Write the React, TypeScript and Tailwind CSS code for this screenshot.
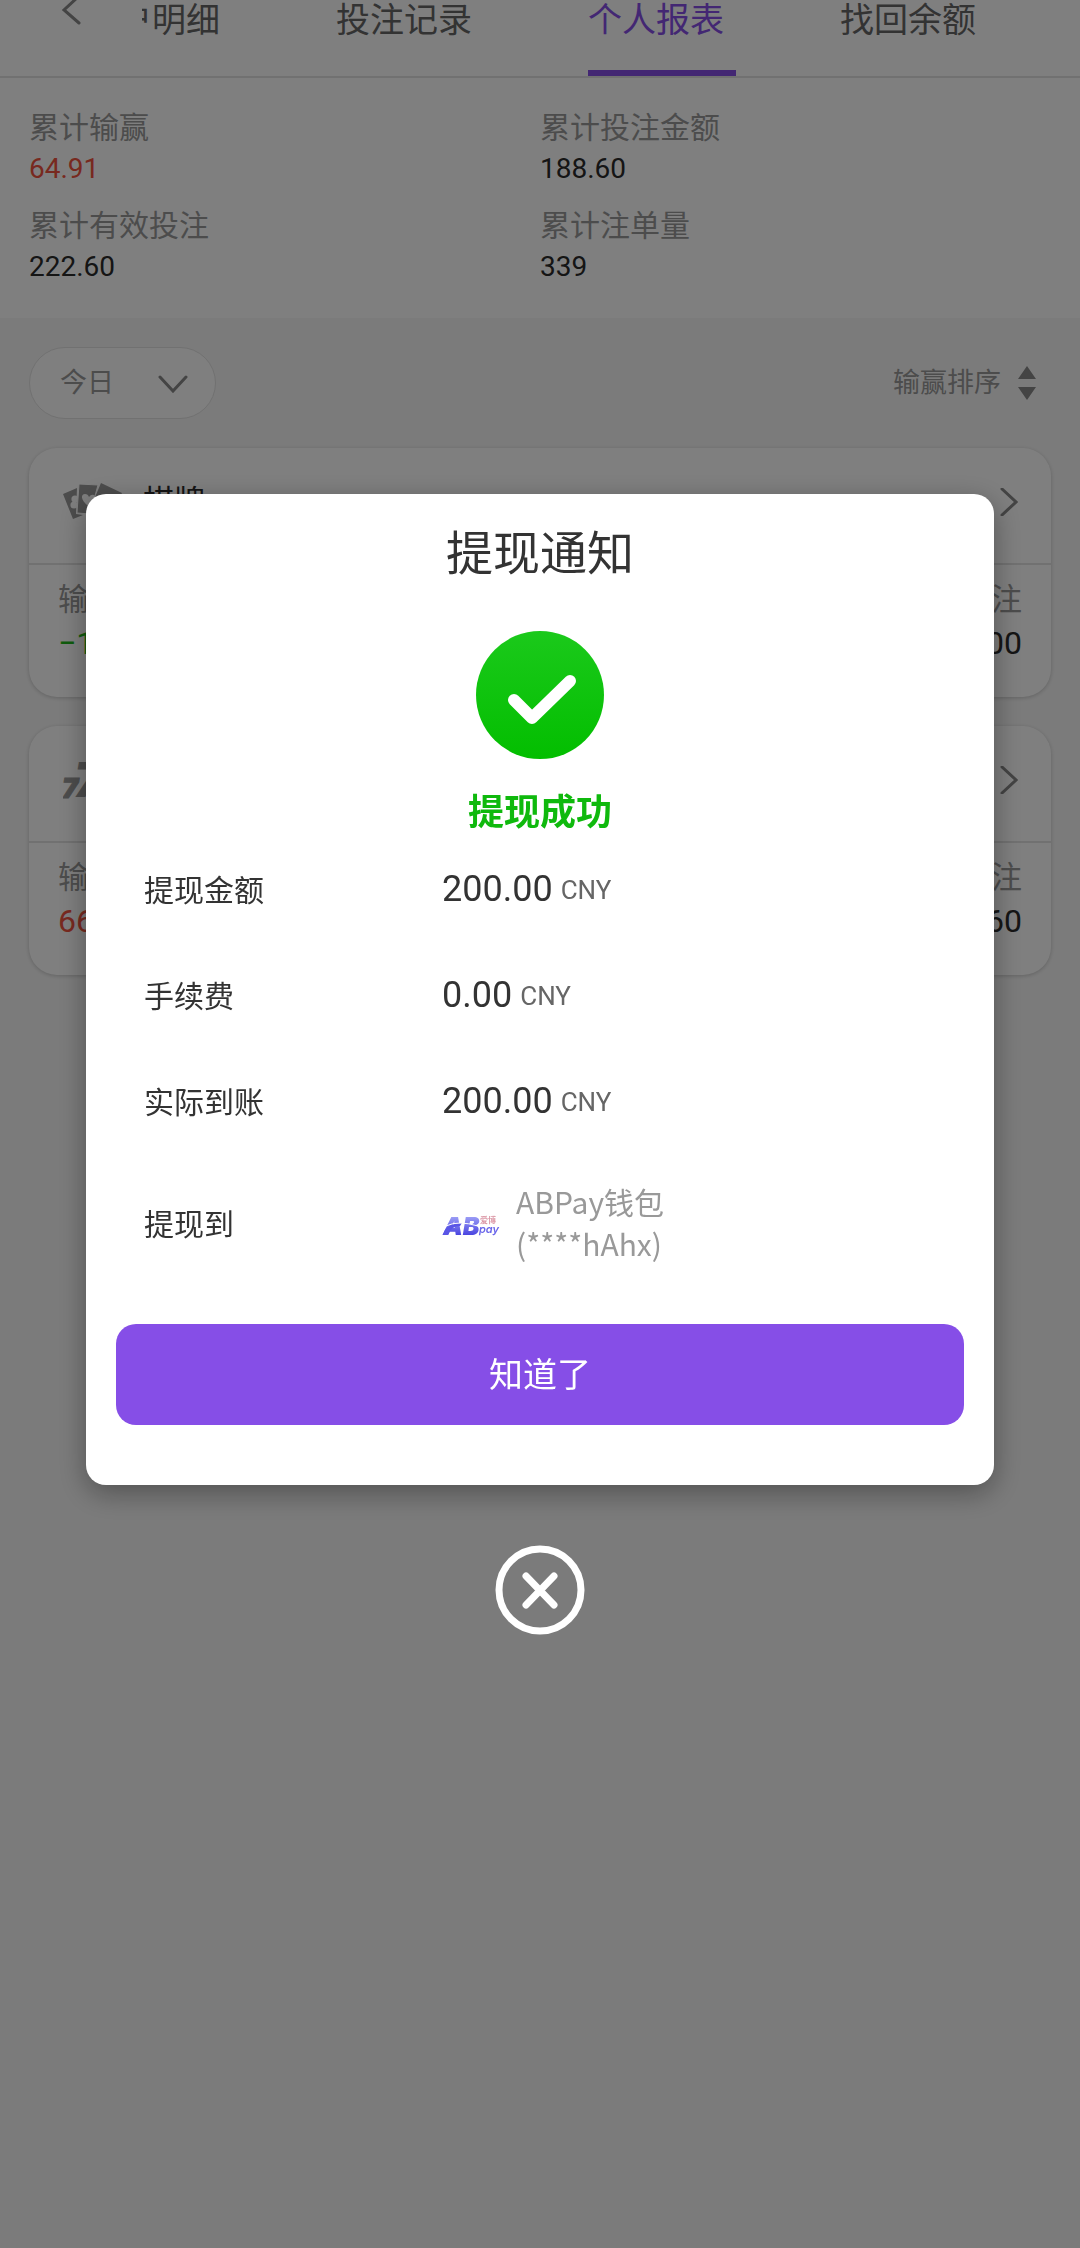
import {useState, type ReactNode} from 'react';

type Tone = 'red' | 'green' | 'dark';

const toneClass: Record<Tone, string> = {
  red: 'text-[#f0533f]',
  green: 'text-[#1fb81a]',
  dark: 'text-[#2b2b2b]',
};

const tabs = ['账户明细', '投注记录', '个人报表', '找回余额'];

const totals: {label: string; value: string; tone: Tone}[] = [
  {label: '累计输赢', value: '64.91', tone: 'red'},
  {label: '累计投注金额', value: '188.60', tone: 'dark'},
  {label: '累计有效投注', value: '222.60', tone: 'dark'},
  {label: '累计注单量', value: '339', tone: 'dark'},
];

const amounts = [
  {label: '提现金额', value: '200.00'},
  {label: '手续费', value: '0.00'},
  {label: '实际到账', value: '200.00'},
];

function CardsIcon() {
  return (
    <svg width="60" height="40" viewBox="0 0 60 40" aria-hidden="true">
      <path d="M0 12 L14 6 L13 32 L20 33 L10 37 Z" fill="#999" />
      <circle cx="12" cy="17" r="3.6" fill="#fff" />
      <circle cx="11" cy="23" r="3.6" fill="#fff" />
      <path d="M38 1 L59 11 L47 36 L27 27 Z" fill="#999" />
      <path d="M16 2 L35 3 L27 32 L14 31 Z" fill="#999" stroke="#fff" strokeWidth="1" />
      <path d="M25 24 C17 17 18 12 22 12 Q25 12 26 15 Q28 12 31 13 C34 15 32 19 25 24 Z" fill="#fff" />
    </svg>
  );
}

function SlotsIcon() {
  return (
    <svg width="60" height="40" viewBox="0 0 60 40" aria-hidden="true">
      <g fill="#999" stroke="#999" strokeWidth="1" fontFamily="Inter, sans-serif" fontWeight="900" fontStyle="italic">
        <text x="-1" y="38" fontSize="27">7</text>
        <text x="38" y="38" fontSize="27">7</text>
        <text x="11" y="37" fontSize="48" stroke="#fff" strokeWidth="2" paintOrder="stroke">7</text>
      </g>
    </svg>
  );
}

function WalletLogo() {
  return (
    <svg width="60" height="60" viewBox="0 0 60 60" role="img" aria-label="ABPay">
      <defs>
        <linearGradient id="wallet" x1="0" y1="0" x2="0" y2="1">
          <stop offset="0.2" stopColor="#9a9cf5" />
          <stop offset="0.8" stopColor="#4a45e0" />
        </linearGradient>
      </defs>
      <text x="1" y="43" fontFamily="Inter, sans-serif" fontWeight="900" fontStyle="italic" fontSize="25" fill="url(#wallet)">AB</text>
      <path d="M1 43 Q3 34 12 32 L20 31 L18 34 Q9 34 6 43 Z" fill="#5a56e6" />
      <path d="M4 34 Q16 28 36 34" fill="none" stroke="#fff" strokeWidth="1" />
      <text x="38" y="31" fontFamily="'Noto Sans CJK SC', sans-serif" fontWeight="700" fontSize="8" fill="#dc9aa8">爱博</text>
      <text x="37" y="41" fontFamily="Inter, sans-serif" fontWeight="600" fontStyle="italic" fontSize="11" fill="#6a66ea">pay</text>
    </svg>
  );
}

function GameCard({icon, title, profit, tone, valid}: {
  icon: ReactNode;
  title: string;
  profit: string;
  tone: Tone;
  valid: string;
}) {
  return (
    <article className="rounded-[28px] bg-white shadow-[0_1px_4px_rgba(0,0,0,0.2)]">
      <a href="#detail" className="flex h-[117px] items-center border-b-2 border-[#e2e2e2] pr-[33px] pb-2 pl-[34px]">
        {icon}
        <h2 className="ml-5 grow pb-1 text-[31px] text-[#2b2b2b]">{title}</h2>
        <svg width="18" height="28" viewBox="0 0 18 28" fill="none" stroke="#888" strokeWidth="3" strokeLinecap="round" aria-hidden="true">
          <path d="M2 1 L16 14 L2 27" />
        </svg>
      </a>
      <dl className="flex h-[132px] justify-between px-[29px] pt-[9px]">
        <div>
          <dt className="text-[31px] leading-[46px] text-[#999]">输赢</dt>
          <dd className={`font-[Roboto,sans-serif] text-[32px] leading-[46px] ${toneClass[tone]}`}>{profit}</dd>
        </div>
        <div className="text-right">
          <dt className="text-[31px] leading-[46px] text-[#999]">有效投注</dt>
          <dd className="font-[Roboto,sans-serif] text-[32px] leading-[46px] text-[#2b2b2b]">{valid}</dd>
        </div>
      </dl>
    </article>
  );
}

function WithdrawDialog({onClose}: {onClose: () => void}) {
  return (
    <div className="fixed inset-0 flex flex-col items-center justify-center bg-black/50 px-[86px] pb-[119px]">
      <section role="dialog" aria-modal="true" aria-labelledby="dialog-title" className="flex w-full flex-col items-center rounded-[20px] bg-white px-[30px] pt-[22px] pb-[60px] shadow-[0_8px_28px_rgba(0,0,0,0.35)]">
        <h1 id="dialog-title" className="text-[47px] leading-[68px] text-[#333]">提现通知</h1>
        <svg width="128" height="128" viewBox="0 0 128 128" className="mt-[47px]" aria-hidden="true">
          <defs>
            <linearGradient id="ok" x1="0" y1="0" x2="0" y2="1">
              <stop offset="0" stopColor="#1bc91b" />
              <stop offset="1" stopColor="#03be00" />
            </linearGradient>
          </defs>
          <circle cx="64" cy="64" r="64" fill="url(#ok)" />
          <path d="M38 69 L56 87 L94 50" fill="none" stroke="#fff" strokeWidth="12" strokeLinecap="round" strokeLinejoin="round" />
        </svg>
        <p className="mt-6 text-[36px] leading-[52px] font-bold text-[#0fb90d]">提现成功</p>
        <dl className="w-full px-7">
          {amounts.map((row) => (
            <div key={row.label} className="flex h-[106px] items-center">
              <dt className="w-[298px] text-[30px] text-[#333]">{row.label}</dt>
              <dd className="flex items-center gap-2 pt-0.5 font-[Roboto,sans-serif] text-[36px] text-[#333]">
                {row.value}
                <span className="pt-0.5 text-[26px] text-[#666]">CNY</span>
              </dd>
            </div>
          ))}
          <div className="flex h-[138px] items-center">
            <dt className="w-[298px] text-[30px] text-[#333]">提现到</dt>
            <dd className="flex items-center gap-[14px] text-[30px] leading-[42px] text-[#999]">
              <WalletLogo />
              <span>
                ABPay钱包
                <br />
                (****hAhx)
              </span>
            </dd>
          </div>
        </dl>
        <button type="button" onClick={onClose} className="mt-[33px] h-[101px] w-full rounded-[20px] bg-[#864ee7] pb-1 text-[34px] text-white">
          知道了
        </button>
      </section>
      <button type="button" aria-label="关闭" onClick={onClose} className="mt-[60px]">
        <svg width="90" height="90" viewBox="0 0 90 90" fill="none" stroke="#fff" strokeWidth="7" strokeLinecap="round">
          <circle cx="45" cy="45" r="41" />
          <path d="M31 31 L59 60 M59 31 L31 60" />
        </svg>
      </button>
    </div>
  );
}

export default function App() {
  const [open, setOpen] = useState(true);
  const [active, setActive] = useState('个人报表');

  return (
    <div className="min-h-screen bg-[#f7f7f7] font-['Noto_Sans_CJK_SC',sans-serif]">
      <header className="flex h-[78px] overflow-hidden border-b-2 border-[#e2e2e2] bg-white">
        <a href="#back" aria-label="返回" className="w-[142px] shrink-0 pl-[60px]">
          <svg width="24" height="30" viewBox="0 0 24 30" fill="none" stroke="#888" strokeWidth="3" strokeLinecap="round">
            <path d="M19 -4 L4 10 L19 23" />
          </svg>
        </a>
        <nav className="flex min-w-0 grow justify-end gap-[104px] overflow-hidden pr-[92px]">
          {tabs.map((tab) => (
            <button
              key={tab}
              type="button"
              onClick={() => setActive(tab)}
              className={`flex w-[148px] shrink-0 items-start border-b-6 text-[34px] leading-[36px] ${
                tab === active ? 'border-[#864ee7] text-[#864ee7]' : 'border-transparent text-[#666]'
              }`}
            >
              {tab}
            </button>
          ))}
        </nav>
      </header>

      <dl className="grid grid-cols-2 gap-y-[10px] bg-white pt-[26px] pb-7">
        {totals.map((item) => (
          <div key={item.label} className="odd:pl-[29px]">
            <dt className="text-[30px] leading-[42px] text-[#999]">{item.label}</dt>
            <dd className={`font-[Roboto,sans-serif] text-[28px] leading-[46px] ${toneClass[item.tone]}`}>{item.value}</dd>
          </div>
        ))}
      </dl>

      <main className="flex flex-col gap-[29px] px-[29px] pt-[29px]">
        <div className="flex items-center justify-between">
          <label className="relative h-[72px] w-[187px]">
            <select aria-label="日期" className="h-full w-full appearance-none rounded-full border border-[#e2e2e2] bg-white pb-[3px] pl-[30px] text-[27px] text-[#999]">
              <option>今日</option>
            </select>
            <svg width="30" height="18" viewBox="0 0 30 18" fill="none" stroke="#888" strokeWidth="3" strokeLinecap="round" className="pointer-events-none absolute top-7 right-[28px]" aria-hidden="true">
              <path d="M2 2 L15 16 L28 2" />
            </svg>
          </label>
          <button type="button" className="flex items-center gap-4 pr-[14px] text-[27px] text-[#999]">
            <span className="pb-[3px]">输赢排序</span>
            <svg width="20" height="34" viewBox="0 0 20 34" fill="#888" aria-hidden="true">
              <path d="M10 0 L19 13 H1 Z M10 34 L19 21 H1 Z" />
            </svg>
          </button>
        </div>
        <GameCard icon={<CardsIcon />} title="棋牌" profit="−1.69" tone="green" valid="34.00" />
        <GameCard icon={<SlotsIcon />} title="电子" profit="66.60" tone="red" valid="188.60" />
      </main>

      {open && <WithdrawDialog onClose={() => setOpen(false)} />}
    </div>
  );
}
